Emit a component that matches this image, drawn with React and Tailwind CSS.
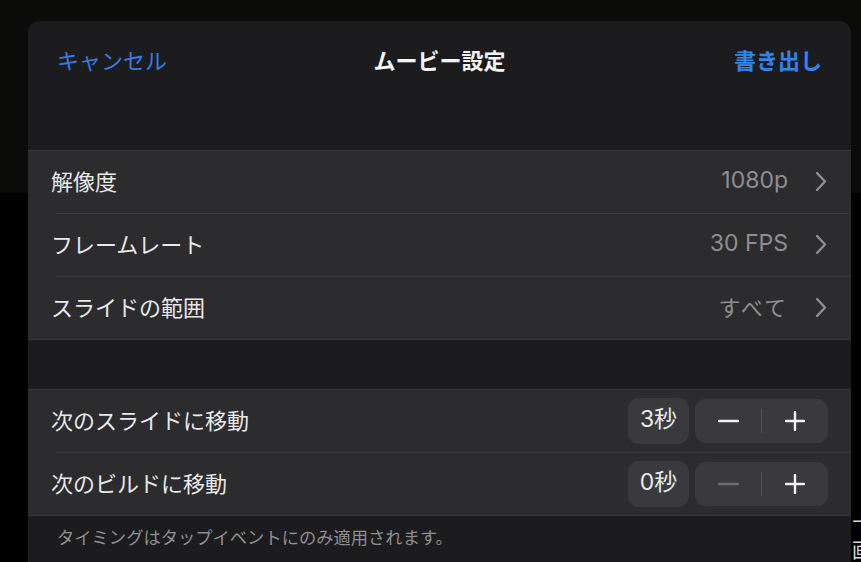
import React from "react";

const font = { fontFamily: '"Noto Sans CJK JP", "Noto Sans", sans-serif' };
const valFont = { fontFamily: 'Inter, "Noto Sans CJK JP", sans-serif' };

function Chevron() {
  return (
    <svg width="12" height="21" viewBox="0 0 12 21" fill="none">
      <polyline points="2,2 10,10.5 2,19" stroke="#8e8e93" strokeWidth="2.4" strokeLinecap="round" strokeLinejoin="round" />
    </svg>
  );
}

function NavRow({ label, value, kana }) {
  return (
    <div className="flex h-[62px] items-center pl-[23px] pr-[24px] pb-[4px]">
      <span className="text-[22px] text-[#e8e8ea] leading-none">{label}</span>
      {kana ? (
        <span className="ml-auto text-[22px] tracking-[2px] text-[#8e8e93] leading-none">{value}</span>
      ) : (
        <span className="ml-auto text-[23px] text-[#8e8e93] leading-none" style={valFont}>{value}</span>
      )}
      <span className="ml-[27px] flex items-center pt-[3px]"><Chevron /></span>
    </div>
  );
}

function Sep() {
  return <div className="ml-[28px] h-px bg-[#3a3a3c]" />;
}

function StepRow({ label, value, minusDisabled }) {
  return (
    <div className="flex h-[62px] items-center pl-[23px] pr-[23px]">
      <span className="text-[22px] text-[#e8e8ea] leading-none pb-[4px]">{label}</span>
      <div className="ml-auto flex items-center gap-[6px]">
        <div className="flex h-[46px] w-[61px] items-center justify-center rounded-[11px] bg-[#3a3a3c] text-[23px] text-[#e8e8ea] leading-none pb-[3px]" style={valFont}>
          {value}
        </div>
        <div className="flex h-[44px] w-[133px] items-center rounded-[11px] bg-[#3a3a3c]">
          <div className="flex flex-1 items-center justify-center">
            <svg width="21" height="4" viewBox="0 0 21 4">
              <line x1="1" y1="2" x2="20" y2="2" stroke={minusDisabled ? "#6c6c70" : "#f2f2f4"} strokeWidth="2.4" strokeLinecap="round" />
            </svg>
          </div>
          <div className="h-[24px] w-px bg-[#545458]" />
          <div className="flex flex-1 items-center justify-center">
            <svg width="20" height="20" viewBox="0 0 20 20">
              <line x1="1" y1="10" x2="19" y2="10" stroke="#f2f2f4" strokeWidth="2.4" strokeLinecap="round" />
              <line x1="10" y1="1" x2="10" y2="19" stroke="#f2f2f4" strokeWidth="2.4" strokeLinecap="round" />
            </svg>
          </div>
        </div>
      </div>
    </div>
  );
}

export default function App() {
  return (
    <div className="relative h-[562px] w-[861px] overflow-hidden bg-black" style={font}>
      <div className="h-[193px] bg-[#0b0c09]" />
      <div className="absolute left-[852px] top-[508px] flex flex-col text-[20px] leading-[28px] text-[#d8d8d8]">
        <span>十</span>
        <span>画</span>
      </div>
      <div className="absolute left-[28px] top-[21px] bottom-0 w-[823px] rounded-t-[12px] bg-[#1c1c1e] flex flex-col">
        <div className="h-[129px]">
          <div className="relative flex h-[76px] items-center px-[29px]">
            <span className="text-[22px] text-[#2f7fe6] leading-none">キャンセル</span>
            <span className="absolute left-0 right-0 text-center text-[22px] font-bold text-[#f5f5f7] leading-none pointer-events-none">ムービー設定</span>
            <span className="ml-auto text-[22px] font-bold text-[#2f86f0] leading-none">書き出し</span>
          </div>
        </div>
        <div className="border-t border-b border-[#38383a] bg-[#2c2c2e]">
          <NavRow label="解像度" value="1080p" />
          <Sep />
          <NavRow label="フレームレート" value="30 FPS" />
          <Sep />
          <NavRow label="スライドの範囲" value="すべて" kana />
        </div>
        <div className="h-[49px]" />
        <div className="border-t border-b border-[#38383a] bg-[#2c2c2e]">
          <StepRow label="次のスライドに移動" value="3秒" />
          <Sep />
          <StepRow label="次のビルドに移動" value="0秒" minusDisabled />
        </div>
        <div className="pl-[29px] pt-[12px] text-[17.3px] text-[#8e8e93] leading-none">
          タイミングはタップイベントにのみ適用されます。
        </div>
      </div>
    </div>
  );
}
